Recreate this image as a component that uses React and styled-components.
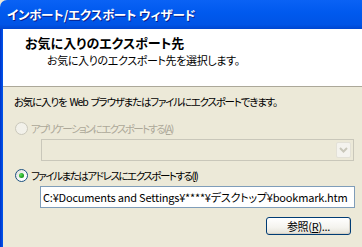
import styled, { createGlobalStyle } from "styled-components";

const Global = createGlobalStyle`
  body {
    margin: 0;
    background: #ECE9D8;
  }
`;

const Window = styled.div`
  width: 362px;
  height: 247px;
  display: flex;
  flex-direction: column;
  overflow: hidden;
  background: #ECE9D8;
  font-family: "Noto Sans CJK JP", "Noto Sans", sans-serif;
  font-feature-settings: "palt";
  color: #000;
`;

const TitleBar = styled.div`
  height: 29px;
  flex: none;
  display: flex;
  align-items: center;
  padding-left: 7px;
  border-top-left-radius: 7px;
  background: linear-gradient(180deg, #0A62F5 0%, #0059EE 45%, #0054E6 85%, #0046D0 100%);
  color: #fff;
  font-size: 12.5px;
  font-weight: 700;
  letter-spacing: -0.2px;
  text-shadow: 1px 1px 0 #0A1E8C;
`;

const Frame = styled.div`
  flex: 1;
  display: flex;
  min-height: 0;
`;

const Edge = styled.div`
  width: 3px;
  flex: none;
  background: linear-gradient(90deg, #0032C8, #0058EE);
`;

const Client = styled.div`
  flex: 1;
  min-width: 0;
  display: flex;
  flex-direction: column;
`;

const Header = styled.div`
  height: 58px;
  flex: none;
  background: #fff;
  border-bottom: 1px solid #ACA899;
  padding: 6px 0 0 22px;
  box-sizing: border-box;
`;

const HeaderTitle = styled.div`
  font-size: 13px;
  font-weight: 700;
  line-height: 16px;
`;

const HeaderSub = styled.div`
  font-size: 11px;
  line-height: 16px;
  margin: 1px 0 0 22px;
  letter-spacing: -0.35px;
`;

const Body = styled.div`
  display: flex;
  flex-direction: column;
  padding: 7px 0 0 11px;
`;

const Line = styled.div`
  font-size: 10.5px;
  line-height: 16px;
  letter-spacing: -1.2px;
  word-spacing: 2px;
  white-space: nowrap;
`;

const RadioRow = styled.div`
  display: flex;
  align-items: center;
  gap: 3px;
  height: 16px;
  margin-top: ${(p) => p.$top}px;
  font-size: 10.5px;
  letter-spacing: ${(p) => p.$spacing}px;
  white-space: nowrap;
  color: ${(p) => (p.$disabled ? "#ACA899" : "#000")};
`;

const Radio = styled.span`
  position: relative;
  flex: none;
  width: 13px;
  height: 13px;
  box-sizing: border-box;
  border-radius: 50%;
  margin-left: 1px;
  border: 1px solid ${(p) => (p.$disabled ? "#CAC8BB" : "#1C5180")};
  background: ${(p) =>
    p.$disabled ? "#F2F1EA" : "linear-gradient(135deg, #DCDCD7 0%, #FFFFFF 70%)"};

  &::after {
    content: "";
    display: ${(p) => (p.$checked ? "block" : "none")};
    position: absolute;
    left: 3px;
    top: 3px;
    width: 5px;
    height: 5px;
    border-radius: 50%;
    background: radial-gradient(circle at 35% 35%, #5BE05B, #21A121 60%, #0C7A0C);
  }
`;

const Key = styled.u`
  text-underline-offset: 1px;
`;

const Combo = styled.div`
  margin: 3px 8px 0 27px;
  height: 22px;
  box-sizing: border-box;
  border: 1px solid #C9C7BA;
  background: #ECE9D8;
  display: flex;
  justify-content: flex-end;
  align-items: center;
  padding-right: 2px;
`;

const DropButton = styled.div`
  width: 15px;
  height: 16px;
  box-sizing: border-box;
  border: 1px solid #E3E1D7;
  border-radius: 2px;
  background: #F4F3EE;
  display: flex;
  align-items: center;
  justify-content: center;
`;

const Field = styled.div`
  margin: 3px 7px 0 26px;
  height: 22px;
  box-sizing: border-box;
  border: 1px solid #7F9DB9;
  background: #fff;
  display: flex;
  align-items: center;
  padding-left: 2px;
  font-size: 11px;
  letter-spacing: -0.2px;
  white-space: nowrap;
  overflow: hidden;
`;

const ButtonRow = styled.div`
  display: flex;
  justify-content: flex-end;
  margin: 9px 11px 0 0;
`;

const Button = styled.div`
  width: 85px;
  height: 18px;
  box-sizing: border-box;
  border: 1px solid #003C74;
  border-radius: 3px;
  background: linear-gradient(180deg, #FFFFFF 0%, #F4F3EE 60%, #E3E1D6 100%);
  box-shadow: inset -1px -1px 0 #D6D0C5;
  display: flex;
  align-items: center;
  justify-content: center;
  font-size: 11px;
  letter-spacing: -0.3px;
`;

export default function App() {
  return (
    <>
      <Global />
      <Window>
        <TitleBar>インポート/エクスポート ウィザード</TitleBar>
        <Frame>
          <Edge />
          <Client>
            <Header>
              <HeaderTitle>お気に入りのエクスポート先</HeaderTitle>
              <HeaderSub>お気に入りのエクスポート先を選択します。</HeaderSub>
            </Header>
            <Body>
              <Line>お気に入りを Web ブラウザまたはファイルにエクスポートできます。</Line>
              <RadioRow $top={10} $spacing={-1.65} $disabled>
                <Radio $disabled />
                <span>
                  アプリケーションにエクスポートする(<Key>A</Key>)
                </span>
              </RadioRow>
              <Combo>
                <DropButton>
                  <svg width="9" height="6" viewBox="0 0 9 6">
                    <path d="M1 1 L4.5 4.5 L8 1" fill="none" stroke="#C9C7BA" strokeWidth="2" />
                  </svg>
                </DropButton>
              </Combo>
              <RadioRow $top={6} $spacing={-1.45}>
                <Radio $checked />
                <span>
                  ファイルまたはアドレスにエクスポートする(<Key>I</Key>)
                </span>
              </RadioRow>
              <Field>C:¥Documents and Settings¥****¥デスクトップ¥bookmark.htm</Field>
              <ButtonRow>
                <Button>
                  <span>
                    参照(<Key>R</Key>)...
                  </span>
                </Button>
              </ButtonRow>
            </Body>
          </Client>
        </Frame>
      </Window>
    </>
  );
}
